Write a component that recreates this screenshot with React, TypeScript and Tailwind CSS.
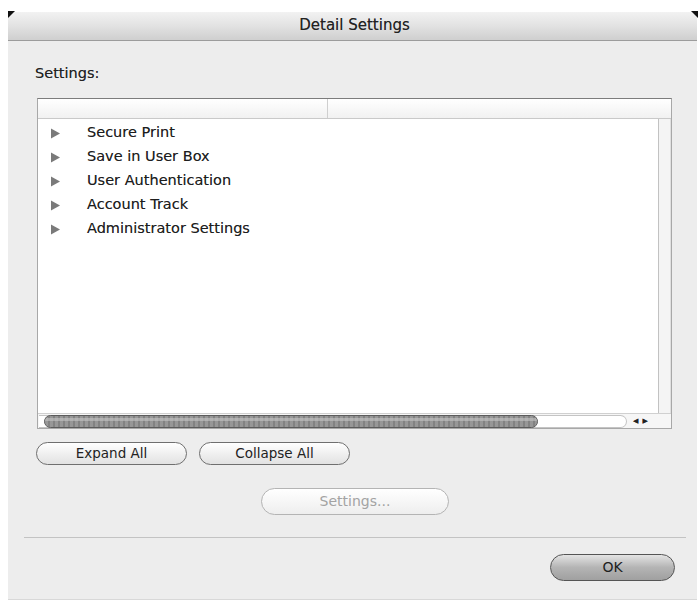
import React from "react";

const rows = [
  "Secure Print",
  "Save in User Box",
  "User Authentication",
  "Account Track",
  "Administrator Settings",
];

function Tri() {
  return (
    <svg width="11" height="11" viewBox="0 0 11 11" className="shrink-0">
      <path d="M1 0.5 L10 5.5 L1 10.5 Z" fill="#7a7a7a" />
    </svg>
  );
}

export default function App() {
  return (
    <div
      className="relative w-[698px] h-[604px] bg-white overflow-hidden [text-shadow:0_0_0.5px_rgba(0,0,0,0.45)]"
      style={{ fontFamily: '"DejaVu Sans", "Liberation Sans", sans-serif' }}
    >
      <div className="ml-[8px] mt-[12px] w-[689px] h-[588px] bg-[#ededed] flex flex-col border-b border-[#d8d8d8]">
        {/* title bar */}
        <div className="h-[29px] shrink-0 flex items-center justify-center bg-gradient-to-b from-[#f2f2f2] via-[#e2e2e2] to-[#cfcfcf] border-b border-[#9c9c9c] text-[15px] text-[#222] pl-[4px] pb-[1px]">
          Detail Settings
        </div>

        <div className="pl-[27px] pt-[24px] text-[14.5px] text-[#222] leading-[16px]">
          Settings:
        </div>

        {/* table */}
        <div className="ml-[29px] mt-[17px] w-[635px] h-[331px] flex flex-col border border-[#a8a8a8] border-t-[#7c7c7c] bg-white">
          <div className="h-[20px] shrink-0 flex bg-gradient-to-b from-[#ffffff] to-[#f1f1f1] border-b border-[#c9c9c9]">
            <div className="w-[290px] border-r border-[#cfcfcf]" />
            <div className="flex-1" />
          </div>
          <div className="flex-1 flex min-h-0">
            <div className="flex-1 flex flex-col pt-[2px]">
              {rows.map((r) => (
                <div key={r} className="h-[24px] flex items-center">
                  <div className="ml-[12px] w-[37px]">
                    <Tri />
                  </div>
                  <span className="text-[14.5px] text-[#1e1e1e]">{r}</span>
                </div>
              ))}
            </div>
            <div className="w-[13px] bg-[#f4f4f4] border-l border-[#c2c2c2] border-r border-r-[#e0e0e0]" />
          </div>
          {/* horizontal scrollbar */}
          <div className="h-[15px] shrink-0 flex items-center bg-[#f6f6f6] border-t border-[#d0d0d0]">
            <div className="relative ml-[1px] w-[588px] h-[13px] rounded-r-full bg-white border border-[#c4c4c4] border-l-0">
              <div className="absolute left-[5px] top-[-1px] w-[494px] h-[13px] rounded-full bg-[#8d8d8d] border border-[#5b5b5b] overflow-hidden">
                <div className="w-full h-full bg-[repeating-linear-gradient(90deg,#9c9c9c_0px,#9c9c9c_3px,#7e7e7e_3px,#7e7e7e_5px)] opacity-70" />
                <div className="absolute left-0 right-0 top-[2px] h-[3px] bg-[#c4c4c4] opacity-60" />
              </div>
            </div>
            <div className="flex items-center gap-[4px] ml-[6px] text-[7px] text-[#222]">
              <span>◀</span>
              <span>▶</span>
            </div>
          </div>
        </div>

        {/* buttons */}
        <div className="flex gap-[12px] ml-[28px] mt-[13px]">
          <button className="w-[151px] h-[23px] rounded-full border border-[#6f6f6f] bg-gradient-to-b from-[#ffffff] via-[#f0f0f0] to-[#e2e2e2] text-[13.5px] text-[#222]">
            Expand All
          </button>
          <button className="w-[151px] h-[23px] rounded-full border border-[#6f6f6f] bg-gradient-to-b from-[#ffffff] via-[#f0f0f0] to-[#e2e2e2] text-[13.5px] text-[#222]">
            Collapse All
          </button>
        </div>

        <div className="ml-[253px] mt-[23px]">
          <button className="w-[188px] h-[27px] rounded-full border border-[#b4b4b4] bg-gradient-to-b from-[#ffffff] to-[#eeeeee] text-[14px] text-[#a3a3a3]">
            Settings...
          </button>
        </div>

        <div className="ml-[16px] mr-[11px] mt-[22px] h-px bg-[#c3c3c3]" />

        <div className="flex justify-end mr-[22px] mt-[16px]">
          <button className="w-[125px] h-[27px] rounded-full border border-[#555] bg-gradient-to-b from-[#e4e4e4] via-[#b4b4b4] to-[#a0a0a0] text-[14px] text-[#1f1f1f]">
            OK
          </button>
        </div>
      </div>

      {/* window corner marks */}
      <svg className="absolute left-[8px] top-[11px]" width="7" height="7" viewBox="0 0 7 7">
        <path d="M0 0 L7 0 L0 7 Z" fill="#111" />
      </svg>
      <svg className="absolute left-[691px] top-[11px]" width="7" height="7" viewBox="0 0 7 7">
        <path d="M0 0 L7 0 L7 7 Z" fill="#111" />
      </svg>
    </div>
  );
}
